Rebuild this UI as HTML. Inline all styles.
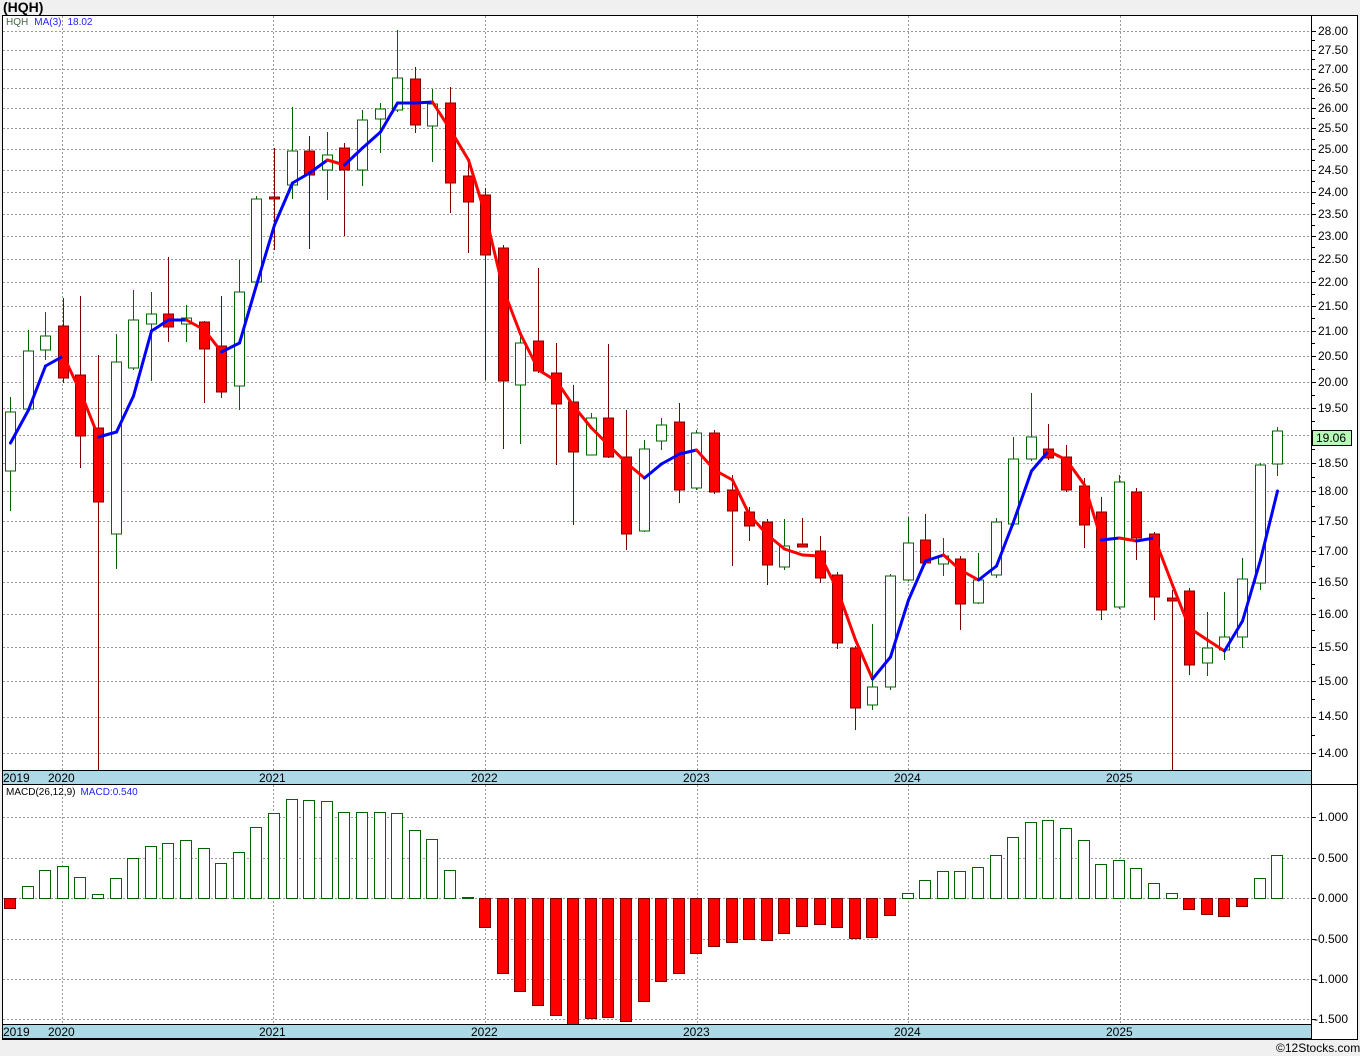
<!DOCTYPE html>
<html><head><meta charset="utf-8"><style>
body{margin:0;background:#f0f0f0;width:1360px;height:1056px;overflow:hidden;font-family:"Liberation Sans",sans-serif}
svg{position:absolute;left:0;top:0}
text{font-family:"Liberation Sans",sans-serif}
</style></head><body>
<svg id="s" width="1360" height="1056" xmlns="http://www.w3.org/2000/svg">
<rect x="0" y="0" width="1360" height="1056" fill="#f0f0f0"/>
<text x="3" y="12" font-size="14" font-weight="bold" fill="#000">(HQH)</text>
<rect x="2.5" y="15.5" width="1355" height="1024" fill="#fff" stroke="#000"/>
<g id="grid" stroke="#999" stroke-dasharray="2,2" stroke-width="1"></g>
<g id="cand"></g>
<g id="ma" fill="none" stroke-width="3" stroke-linecap="round"></g>
<g id="macd"></g>
<rect x="2.5" y="770.5" width="1309" height="14" fill="#add8e6" stroke="#000"/>
<rect x="2.5" y="1024.5" width="1309" height="14" fill="#add8e6" stroke="#000"/>
<line x1="1311.5" y1="15" x2="1311.5" y2="1039" stroke="#000"/>
<line x1="1311" y1="784.5" x2="1358" y2="784.5" stroke="#000"/>
<g id="ticks" stroke="#000"></g>
<g font-size="12" fill="#000">
<text x="3" y="782">2019</text><text x="48" y="782">2020</text><text x="259" y="782">2021</text><text x="471" y="782">2022</text><text x="683" y="782">2023</text><text x="894" y="782">2024</text><text x="1106" y="782">2025</text>
<text x="3" y="1036">2019</text><text x="48" y="1036">2020</text><text x="259" y="1036">2021</text><text x="471" y="1036">2022</text><text x="683" y="1036">2023</text><text x="894" y="1036">2024</text><text x="1106" y="1036">2025</text>
</g>
<g font-size="12" fill="#000">
<text x="1318" y="35">28.00</text><text x="1318" y="54">27.50</text><text x="1318" y="73">27.00</text><text x="1318" y="92">26.50</text><text x="1318" y="112">26.00</text><text x="1318" y="132">25.50</text><text x="1318" y="153">25.00</text><text x="1318" y="174">24.50</text><text x="1318" y="196">24.00</text><text x="1318" y="218">23.50</text><text x="1318" y="240">23.00</text><text x="1318" y="263">22.50</text><text x="1318" y="286">22.00</text><text x="1318" y="310">21.50</text><text x="1318" y="335">21.00</text><text x="1318" y="360">20.50</text><text x="1318" y="386">20.00</text><text x="1318" y="412">19.50</text><text x="1318" y="467">18.50</text><text x="1318" y="495">18.00</text><text x="1318" y="525">17.50</text><text x="1318" y="555">17.00</text><text x="1318" y="586">16.50</text><text x="1318" y="618">16.00</text><text x="1318" y="651">15.50</text><text x="1318" y="685">15.00</text><text x="1318" y="720">14.50</text><text x="1318" y="757">14.00</text>
<text x="1318" y="821">1.000</text><text x="1318" y="862">0.500</text><text x="1318" y="902">0.000</text><text x="1314" y="943">-0.500</text><text x="1314" y="983">-1.000</text><text x="1314" y="1023">-1.500</text>
</g>
<rect x="1312.5" y="430.5" width="39" height="15" fill="#b8f8b8" stroke="#000"/>
<text x="1316" y="442" font-size="12" fill="#000">19.06</text>
<text x="6" y="25" font-size="10"><tspan fill="#446644">HQH</tspan><tspan fill="#2222ff" dx="6">MA(3)</tspan><tspan fill="#2222ff" dx="6">18.02</tspan></text>
<text x="6" y="795" font-size="10"><tspan fill="#000">MACD(26,12,9)</tspan><tspan fill="#2222ff" dx="5">MACD:0.540</tspan></text>
<text x="1276" y="1052" font-size="12" fill="#000">©12Stocks.com</text>
</svg>
<script>
var NS="http://www.w3.org/2000/svg";
function el(p,t,a){var e=document.createElementNS(NS,t);for(var k in a)e.setAttribute(k,a[k]);document.getElementById(p).appendChild(e);return e;}
var py=[31,49.8,68.9,88.4,108.2,128.4,149.1,170.1,191.6,213.5,235.9,258.8,282.2,306.2,330.7,355.8,381.5,407.9,434.9,462.7,491.3,520.6,550.8,581.9,613.9,647,681.2,716.5,753];
py.forEach(function(y){y=Math.round(y)+.5;el("grid","line",{x1:3,y1:y,x2:1311,y2:y});el("ticks","line",{x1:1311,y1:y,x2:1316,y2:y});});
py.slice(0,-1).forEach(function(y,i){var m=Math.round((y+py[i+1])/2)+.5;el("ticks","line",{x1:1311,y1:m,x2:1315,y2:m});});
[817,858,898,939,979,1019].forEach(function(y){y+=.5;el("grid","line",{x1:3,y1:y,x2:1311,y2:y});el("ticks","line",{x1:1311,y1:y,x2:1316,y2:y});});
[62,273,485,697,908,1120].forEach(function(x){x+=.5;el("grid","line",{x1:x,y1:16,x2:x,y2:770});el("grid","line",{x1:x,y1:785,x2:x,y2:1024});el("grid","line",{x1:x,y1:770,x2:x,y2:784});el("grid","line",{x1:x,y1:1025,x2:x,y2:1039});});
// [up?, bodyTop, bodyBot, wickTop, wickBot]
var C=[[1,412,471,397,511],[1,351,409,330,411],[1,336,350,312,360],[0,326,378,298,383],[0,375,436,296,468],[0,428,502,355,770],[1,362,534,334,569],[1,320,368,290,370],[1,314,324,292,381],[0,314,327,257,342],[1,318,324,305,342],[0,322,349,321,403],[0,346,392,296,398],[1,292,386,260,410],[1,199,282,196,287],[0,197,199,148,250],[1,151,185,107,199],[0,151,175,136,249],[1,155,170,132,200],[0,148,170,143,236],[1,120,170,110,186],[1,109,119,103,153],[1,78,110,30,112],[0,79,125,67,133],[1,104,126,89,162],[0,103,183,87,213],[0,176,202,160,253],[0,195,255,188,380],[0,248,381,245,449],[1,343,385,335,444],[0,341,371,268,373],[0,373,404,343,465],[0,402,452,385,525],[1,418,455,413,455],[0,418,457,344,458],[0,457,534,410,550],[1,449,531,440,532],[1,425,441,418,450],[0,422,490,403,503],[1,433,488,430,490],[0,433,492,430,494],[0,490,511,475,566],[0,512,526,507,541],[0,522,565,519,585],[1,546,567,519,570],[0,544,547,518,547],[0,551,578,536,583],[0,575,643,572,649],[0,648,708,646,730],[1,687,705,624,710],[1,576,687,574,690],[1,543,580,517,581],[0,540,563,514,565],[1,556,564,538,576],[0,559,604,556,630],[1,580,603,553,604],[1,522,575,518,578],[1,459,524,437,526],[1,437,459,393,461],[0,449,458,424,460],[0,457,490,445,492],[0,486,525,478,548],[0,512,610,497,620],[1,482,607,475,609],[0,492,538,488,560],[0,534,597,532,620],[0,598,601,590,770],[0,591,665,588,675],[1,648,663,612,676],[1,637,650,592,660],[1,579,637,558,648],[1,465,583,463,590],[1,431,464,427,476]];
function X(i){return Math.round(10+i*17.6);}
C.forEach(function(c,i){var x=X(i)+.5,col=c[0]?"#006400":"#800000";
el("cand","line",{x1:x,y1:c[3],x2:x,y2:c[4],stroke:col});
el("cand","rect",{x:x-5,y:c[1],width:10,height:Math.max(1,c[2]-c[1]),fill:c[0]?"#fff":"#ff0000",stroke:col});});
var M=[443,410,366,356,392,437,432,396,331,320,320,330,352,343,285,225,183,173,160,165,148,132,103,103,102,130,160,215,290,334,370,381,406,428,445,463,478,464,454,450,470,480,515,535,549,555,556,590,640,679,657,600,561,555,570,580,566,522,471,451,460,485,540,538,541,538,585,628,640,651,621,560,491];
for(var i=1;i<M.length;i++){var up=M[i]<=M[i-1];if(i==9||i==10)up=true;if(i==23||i==24)up=true;if(i==63)up=true;
el("ma","line",{x1:X(i-1)+.5,y1:M[i-1],x2:X(i)+.5,y2:M[i],stroke:up?"#0000ff":"#ff0000"});}
var H=[908,886,870,866,877,894,878,858,846,843,840,848,863,852,827,813,799,800,801,812,812,812,813,830,839,870,897,927,973,991,1005,1015,1024,1018,1017,1021,1001,981,973,953,946,942,939,940,933,926,924,927,938,937,915,893,880,871,871,867,855,837,822,820,828,840,864,860,868,883,893,909,914,916,906,878,855];
H.forEach(function(h,i){var x=X(i)-5.5;if(h<898)el("macd","rect",{x:x,y:h+.5,width:11,height:898-h,fill:"#fff",stroke:"#006400"});else el("macd","rect",{x:x,y:898.5,width:11,height:Math.max(1,h-898),fill:"#ff0000",stroke:"#800000"});});
</script>
</body></html>
